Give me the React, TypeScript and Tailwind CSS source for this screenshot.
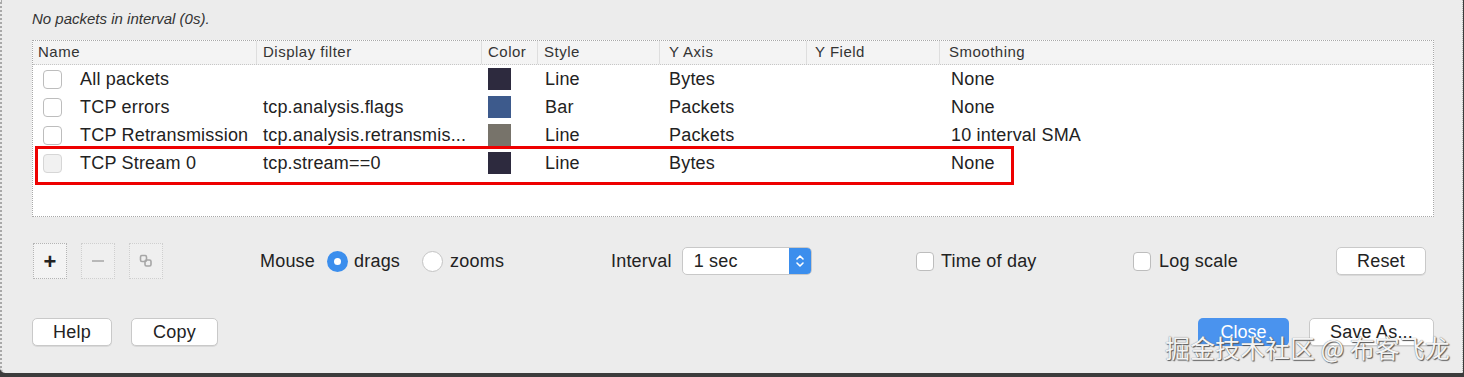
import React from 'react';

const font = { fontFamily: '"Liberation Sans", Arial, sans-serif' };

const rows = [
  { name: 'All packets', filter: '', color: 'bg-[#2d2a3e]', style: 'Line', axis: 'Bytes', smooth: 'None', dim: false },
  { name: 'TCP errors', filter: 'tcp.analysis.flags', color: 'bg-[#3d5a8c]', style: 'Bar', axis: 'Packets', smooth: 'None', dim: false },
  { name: 'TCP Retransmission', filter: 'tcp.analysis.retransmis...', color: 'bg-[#77736a]', style: 'Line', axis: 'Packets', smooth: '10 interval SMA', dim: false },
  { name: 'TCP Stream 0', filter: 'tcp.stream==0', color: 'bg-[#2d2a3e]', style: 'Line', axis: 'Bytes', smooth: 'None', dim: true },
];

const cols = 'grid grid-cols-[224px_225px_56px_122px_147px_133px_1fr]';

const Check = ({ dim }: { dim?: boolean }) => (
  <div
    className={`w-[19px] h-[19px] rounded-[4px] border ${
      dim ? 'border-[#d6d6d6] bg-[#f1f1f1]' : 'border-[#bdbdbd] bg-white'
    }`}
  />
);

const Button = ({ label, className }: { label: string; className: string }) => (
  <button
    className={`h-[28px] rounded-[5px] border border-[#c9c9c9] bg-white text-[18px] tracking-[0.2px] text-[#222] shadow-[0_1px_0_rgba(0,0,0,0.08)] ${className}`}
  >
    {label}
  </button>
);

export default function App() {
  return (
    <div
      className="relative w-[1464px] h-[377px] overflow-hidden bg-[#3c3c3c]"
      style={font}
    >
      <div className="relative h-[373px] w-[1463px] bg-[#ececec] border-l-2 border-dotted border-l-[#a9a9a9] border-r border-r-[#b9b9b9] rounded-bl-[5px] pl-[30px] pt-[11px]">
        <div className="text-[15px] italic text-[#333] h-[16px] leading-[16px]">No packets in interval (0s).</div>

        {/* graph table */}
        <div className="mt-[13px] w-[1402px] h-[177px] border border-dotted border-[#a8a8a8] bg-white">
          <div className={`${cols} h-[24px] bg-[#f4f4f4] border-b border-dotted border-[#c6c6c6] text-[15px] tracking-[0.5px] text-[#333] items-center`}>
            <div className="pl-[5px] border-r border-[#dedede]">Name</div>
            <div className="pl-[6px] border-r border-[#dedede]">Display filter</div>
            <div className="pl-[6px] border-r border-[#dedede]">Color</div>
            <div className="pl-[6px] border-r border-[#dedede]">Style</div>
            <div className="pl-[9px] border-r border-[#dedede]">Y Axis</div>
            <div className="pl-[8px] border-r border-[#dedede]">Y Field</div>
            <div className="pl-[9px]">Smoothing</div>
          </div>
          {rows.map((r) => (
            <div key={r.name} className={`${cols} h-[28px] items-center text-[18px] tracking-[0.2px] text-[#222]`}>
              <div className="flex items-center pl-[10px] gap-[18px]">
                <Check dim={r.dim} />
                <span>{r.name}</span>
              </div>
              <div className="pl-[6px]">{r.filter}</div>
              <div className="pl-[6px]">
                <div className={`w-[23px] h-[22px] ${r.color}`} />
              </div>
              <div className="pl-[7px]">{r.style}</div>
              <div className="pl-[9px]">{r.axis}</div>
              <div />
              <div className="pl-[11px]">{r.smooth}</div>
            </div>
          ))}
        </div>

        {/* controls row */}
        <div className="mt-[26px] flex items-center h-[36px] text-[18px] tracking-[0.2px] text-[#222]">
          <div className="w-[227px] flex gap-[14px] ml-[1px]">
            <div className="w-[34px] h-[36px] border border-dotted border-[#b4b4b4] bg-[#f3f3f3] flex items-center justify-center text-[22px] font-bold text-[#222]">+</div>
            <div className="w-[34px] h-[36px] border border-dotted border-[#cfcfcf] bg-[#efefef] flex items-center justify-center">
              <div className="w-[12px] h-[2px] bg-[#b8b8b8]" />
            </div>
            <div className="w-[34px] h-[36px] border border-dotted border-[#cfcfcf] bg-[#efefef] flex items-center justify-center">
              <svg width="14" height="14" viewBox="0 0 14 14" fill="none" stroke="#a6a6a6" strokeWidth="1.6">
                <rect x="1.5" y="1.5" width="6" height="6" rx="1.5" />
                <rect x="6" y="6" width="6" height="6" rx="1.5" />
              </svg>
            </div>
          </div>

          <div className="w-[351px] flex items-center">
            <span>Mouse</span>
            <span className="ml-[12px] w-[21px] h-[21px] rounded-full bg-[#3b8eed] flex items-center justify-center">
              <span className="w-[7px] h-[7px] rounded-full bg-white" />
            </span>
            <span className="ml-[6px]">drags</span>
            <span className="ml-[22px] w-[21px] h-[21px] rounded-full bg-white border border-[#c4c4c4]" />
            <span className="ml-[7px]">zooms</span>
          </div>

          <div className="w-[305px] flex items-center">
            <span>Interval</span>
            <div className="ml-[10px] flex h-[28px] w-[130px] rounded-[5px] border border-[#c8c8c8] bg-white overflow-hidden">
              <div className="flex-1 pl-[11px] flex items-center">1 sec</div>
              <div className="w-[22px] bg-[#3b8eed] flex items-center justify-center">
                <svg width="10" height="16" viewBox="0 0 10 16" fill="none" stroke="white" strokeWidth="1.6" strokeLinecap="round" strokeLinejoin="round">
                  <path d="M2 6 L5 3 L8 6" />
                  <path d="M2 10 L5 13 L8 10" />
                </svg>
              </div>
            </div>
          </div>

          <div className="w-[217px] flex items-center">
            <div className="w-[18px] h-[19px] rounded-[4px] border border-[#bdbdbd] bg-white" />
            <span className="ml-[7px]">Time of day</span>
          </div>

          <div className="w-[203px] flex items-center">
            <div className="w-[18px] h-[19px] rounded-[4px] border border-[#bdbdbd] bg-white" />
            <span className="ml-[8px]">Log scale</span>
          </div>

          <Button label="Reset" className="w-[90px]" />
        </div>

        {/* bottom buttons */}
        <div className="mt-[39px] flex items-center">
          <Button label="Help" className="w-[80px]" />
          <Button label="Copy" className="ml-[19px] w-[87px]" />
          <button className="ml-auto h-[28px] w-[91px] rounded-[5px] bg-[#4a93ee] text-[18px] text-white">Close</button>
          <Button label="Save As..." className="ml-[20px] mr-[28px] w-[125px]" />
        </div>

        <div
          className="absolute left-[1163px] top-[330px] whitespace-nowrap text-[25px] leading-[34px] text-[#f4f4f4] [text-shadow:0_0_1px_#666,1px_1px_1px_#555]"
          style={{ fontFamily: '"Noto Sans CJK SC", sans-serif' }}
        >
          掘金技术社区 @ 布客飞龙
        </div>

        <div className="absolute left-[33px] top-[146px] w-[979px] h-[39px] border-[3px] border-[#ee0000]" />
      </div>
    </div>
  );
}
